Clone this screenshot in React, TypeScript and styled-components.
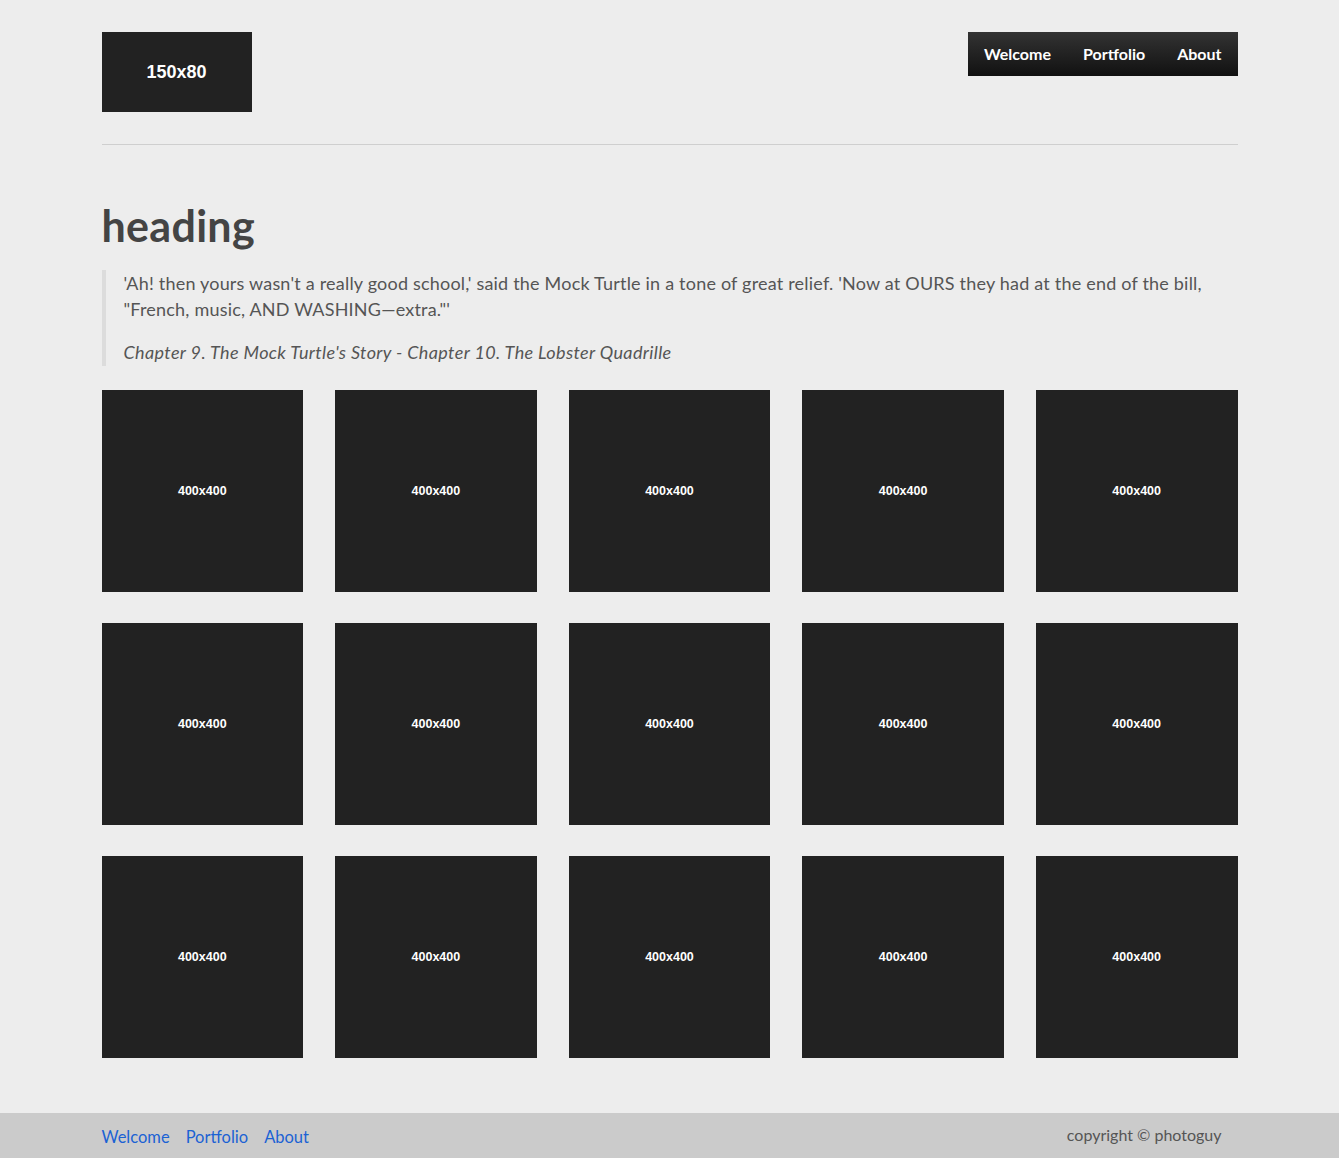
import React from "react";
import styled, { createGlobalStyle } from "styled-components";

const Global = createGlobalStyle`
  html, body { margin: 0; padding: 0; background: #ededed; }
  body { font-family: Lato, "Open Sans", sans-serif; color: #444; }
  * { box-sizing: border-box; }
`;

const Page = styled.div`
  min-height: 100vh;
  display: flex;
  flex-direction: column;
`;

const Container = styled.div`
  width: 1136px;
  margin: 0 auto;
`;

const Header = styled.header`
  display: flex;
  justify-content: space-between;
  align-items: flex-start;
  padding: 32px 0;
  border-bottom: 1px solid #cfcfcf;
`;

const Placeholder = styled.div<{ $size: number }>`
  background: #222;
  color: #fff;
  display: flex;
  align-items: center;
  justify-content: center;
  font-family: "Liberation Sans", Arial, sans-serif;
  font-weight: 700;
  font-size: ${(p) => p.$size}px;
`;

const Logo = styled(Placeholder)`
  width: 150px;
  height: 80px;
`;

const Nav = styled.nav`
  display: flex;
  height: 44px;
  background: linear-gradient(to bottom, #333 0%, #111 100%);
`;

const NavLink = styled.a`
  display: flex;
  align-items: center;
  padding: 0 16px 1px;
  color: #fff;
  font-size: 16px;
  font-weight: 700;
  text-decoration: none;
`;

const Heading = styled.h1`
  margin: 56px 0 19px;
  font-size: 43px;
  line-height: 50px;
  font-weight: 700;
  color: #444;
  letter-spacing: 0.3px;
`;

const Quote = styled.blockquote`
  margin: 0 0 24px;
  border-left: 4px solid #dcdcdc;
  padding: 0 0 1px 18px;
  font-size: 18px;
  line-height: 26px;
  color: #555;
`;

const QuoteText = styled.p`
  margin: 0 0 17px;
  letter-spacing: 0.2px;
`;

const Cite = styled.p`
  margin: 0;
  font-style: italic;
  letter-spacing: 0.36px;
`;

const Grid = styled.div`
  display: grid;
  grid-template-columns: repeat(5, 1fr);
  grid-auto-rows: 202px;
  column-gap: 32px;
  row-gap: 31px;
`;

const Tile = styled(Placeholder)``;

const Footer = styled.footer`
  margin-top: 55px;
  background: #cbcbcb;
  height: 45px;
`;

const FooterInner = styled(Container)`
  height: 100%;
  display: flex;
  align-items: center;
  justify-content: space-between;
  padding-right: 16px;
  padding-top: 2px;
`;

const FooterLinks = styled.div`
  display: flex;
  gap: 16px;
`;

const FooterLink = styled.a`
  color: #1b62d4;
  font-size: 16.5px;
  text-decoration: none;
`;

const Copy = styled.span`
  color: #555;
  font-size: 16px;
  margin-top: -4px;
`;

const links = ["Welcome", "Portfolio", "About"];

export default function App() {
  return (
    <Page>
      <Global />
      <Container>
        <Header>
          <Logo $size={18}>150x80</Logo>
          <Nav>
            {links.map((l) => (
              <NavLink key={l} href="#">
                {l}
              </NavLink>
            ))}
          </Nav>
        </Header>
        <Heading>heading</Heading>
        <Quote>
          <QuoteText>
            'Ah! then yours wasn't a really good school,' said the Mock Turtle in a tone of great
            relief. 'Now at OURS they had at the end of the bill, "French, music, AND
            WASHING—extra."'
          </QuoteText>
          <Cite>Chapter 9. The Mock Turtle's Story - Chapter 10. The Lobster Quadrille</Cite>
        </Quote>
        <Grid>
          {Array.from({ length: 15 }).map((_, i) => (
            <Tile key={i} $size={12.5}>
              400x400
            </Tile>
          ))}
        </Grid>
      </Container>
      <Footer>
        <FooterInner>
          <FooterLinks>
            {links.map((l) => (
              <FooterLink key={l} href="#">
                {l}
              </FooterLink>
            ))}
          </FooterLinks>
          <Copy>copyright © photoguy</Copy>
        </FooterInner>
      </Footer>
    </Page>
  );
}
